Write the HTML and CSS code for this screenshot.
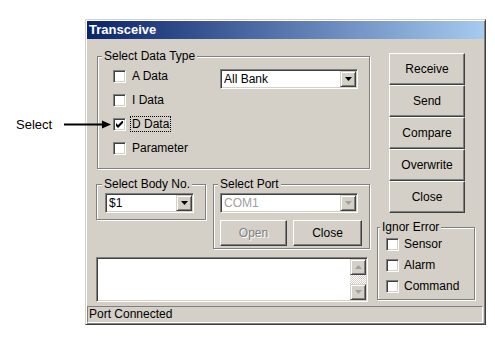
FILE: index.html
```html
<!DOCTYPE html>
<html lang="en">

<head>
    <meta charset="UTF-8">
    <meta name="viewport" content="width=device-width, initial-scale=1.0">
    <link rel="stylesheet" href="styles.css">
</head>

<body>
    <div class="page">
        <!-- annotation pointing at the D Data box -->
        <div class="note">
            <span class="note-text">Select</span>
            <svg class="note-arrow" width="47" height="9" viewBox="0 0 47 9">
                <rect x="0" y="3.5" width="40" height="2" fill="#000" />
                <polygon points="38,0.5 47,4.5 38,8.5" fill="#000" />
            </svg>
        </div>

        <div class="window">
            <div class="titlebar">Transceive</div>
            <div class="client">
                <div class="col-left">
                    <div class="group group-data">
                        <div class="group-title">Select Data Type</div>
                        <div class="data-body">
                            <div class="checks">
                                <div class="check-row"><span class="checkbox"></span><span class="check-label">A Data</span></div>
                                <div class="check-row"><span class="checkbox"></span><span class="check-label">I Data</span></div>
                                <div class="check-row"><span class="checkbox"><svg width="7" height="7" viewBox="0 0 7 7"><polygon points="0,2 2,4 7,-1 7,2 2,7 0,5" fill="#000" /></svg></span><span class="check-label focus">D Data</span></div>
                                <div class="check-row"><span class="checkbox"></span><span class="check-label">Parameter</span></div>
                            </div>
                            <div class="combo combo-bank">
                                <span class="combo-text">All Bank</span>
                                <span class="combo-btn"><svg width="7" height="4" viewBox="0 0 7 4"><polygon points="0,0 7,0 3.5,4" fill="#000" /></svg></span>
                            </div>
                        </div>
                    </div>

                    <div class="row-mid">
                        <div class="group group-body">
                            <div class="group-title">Select Body No.</div>
                            <div class="combo combo-body">
                                <span class="combo-text">$1</span>
                                <span class="combo-btn"><svg width="7" height="4" viewBox="0 0 7 4"><polygon points="0,0 7,0 3.5,4" fill="#000" /></svg></span>
                            </div>
                        </div>
                        <div class="group group-port">
                            <div class="group-title">Select Port</div>
                            <div class="combo combo-port disabled">
                                <span class="combo-text">COM1</span>
                                <span class="combo-btn"><svg width="7" height="4" viewBox="0 0 7 4"><polygon points="0,0 7,0 3.5,4" fill="#a0a0a0" /></svg></span>
                            </div>
                            <div class="port-btns">
                                <div class="btn btn-open disabled">Open</div>
                                <div class="btn btn-close">Close</div>
                            </div>
                        </div>
                    </div>

                    <div class="memo">
                        <div class="scrollbar">
                            <span class="sb-btn"><svg width="7" height="4" viewBox="0 0 7 4"><polygon points="0,4 7,4 3.5,0" fill="#a0a0a0" /></svg></span>
                            <span class="sb-track"></span>
                            <span class="sb-btn"><svg width="7" height="4" viewBox="0 0 7 4"><polygon points="0,0 7,0 3.5,4" fill="#a0a0a0" /></svg></span>
                        </div>
                    </div>
                </div>

                <div class="col-right">
                    <div class="btn-stack">
                        <div class="btn">Receive</div>
                        <div class="btn">Send</div>
                        <div class="btn">Compare</div>
                        <div class="btn">Overwrite</div>
                        <div class="btn">Close</div>
                    </div>
                    <div class="group group-ignore">
                        <div class="group-title">Ignor Error</div>
                        <div class="ignore-row"><span class="checkbox"></span><span class="check-label">Sensor</span></div>
                        <div class="ignore-row"><span class="checkbox"></span><span class="check-label">Alarm</span></div>
                        <div class="ignore-row"><span class="checkbox"></span><span class="check-label">Command</span></div>
                    </div>
                </div>
            </div>
            <div class="statusbar">Port Connected</div>
        </div>
    </div>
</body>

</html>
```

FILE: styles.css
```css
body {
    margin: 0;
    background: #fff;
    font-family: "Liberation Sans", Arial, sans-serif;
    font-size: 12px;
    color: #000;
}

.page {
    position: relative;
    width: 495px;
    height: 347px;
    padding: 19px 0 0 85px;
    box-sizing: border-box;
}

/* annotation */
.note {
    position: absolute;
    left: 16px;
    top: 117px;
    display: flex;
    align-items: center;
    z-index: 2;
}

.note-text {
    font-size: 13px;
    line-height: 15px;
}

.note-arrow {
    display: block;
    margin-left: 12px;
}

/* window frame */
.window {
    width: 401px;
    height: 306px;
    box-sizing: border-box;
    border: 1px solid;
    border-color: #d4d0c8 #404040 #404040 #d4d0c8;
    box-shadow: inset 1px 1px #fff, inset -1px -1px #808080;
    padding: 1px;
    background: #d4d0c8;
}

.titlebar {
    height: 18px;
    line-height: 18px;
    padding-left: 2px;
    background: linear-gradient(to right, #0a246a, #a6caf0);
    color: #fff;
    font-weight: bold;
    font-size: 13px;
}

.client {
    height: 267px;
    display: flex;
    padding-left: 9px;
}

.col-left {
    width: 274px;
}

.col-right {
    width: 99px;
    margin-left: 7px;
}

/* etched group box */
.group {
    box-sizing: border-box;
    border: 1px solid #808080;
    box-shadow: inset 1px 1px #fff, 1px 1px #fff;
}

.group-title {
    width: max-content;
    margin: -8px 0 0 4px;
    padding: 0 2px;
    line-height: 14px;
    background: #d4d0c8;
}

.group-data {
    width: 273px;
    height: 113px;
    margin: 17px 0 0 1px;
}

.data-body {
    display: flex;
    padding-left: 15px;
}

.checks {
    width: 107px;
}

.check-row {
    display: flex;
    align-items: flex-start;
    height: 24px;
}

.check-row .checkbox {
    margin-top: 7px;
}

.check-row .check-label {
    margin: 6px 0 0 6px;
    line-height: 14px;
}

.check-row .check-label.focus {
    margin: 5px 0 0 4px;
    padding: 0 1px;
    border: 1px dotted #000;
}

/* sunken checkbox */
.checkbox {
    width: 13px;
    height: 13px;
    flex: none;
    box-sizing: border-box;
    border: 1px solid;
    border-color: #808080 #fff #fff #808080;
    box-shadow: inset 1px 1px #404040, inset -1px -1px #d4d0c8;
    background: #fff;
    display: flex;
    align-items: center;
    justify-content: center;
}

.checkbox svg {
    display: block;
}

/* combo box */
.combo {
    height: 20px;
    box-sizing: border-box;
    border: 1px solid;
    border-color: #808080 #fff #fff #808080;
    box-shadow: inset 1px 1px #404040, inset -1px -1px #d4d0c8;
    background: #fff;
    padding: 1px;
    display: flex;
}

.combo-text {
    flex: 1;
    line-height: 16px;
    padding-left: 2px;
}

.combo-btn {
    width: 16px;
    height: 16px;
    box-sizing: border-box;
    border: 1px solid;
    border-color: #d4d0c8 #404040 #404040 #d4d0c8;
    box-shadow: inset 1px 1px #fff, inset -1px -1px #808080;
    background: #d4d0c8;
    display: flex;
    align-items: center;
    justify-content: center;
}

.combo-btn svg,
.sb-btn svg {
    display: block;
}

.combo.disabled .combo-text {
    color: #a0a0a0;
}

.combo-bank {
    width: 138px;
    margin-top: 6px;
}

.row-mid {
    display: flex;
    align-items: flex-start;
    margin-top: 15px;
}

.group-body {
    width: 110px;
    height: 36px;
}

.group-body .group-title {
    margin-left: 5px;
}

.combo-body {
    width: 89px;
    margin: 2px 0 0 8px;
}

.group-port {
    width: 157px;
    height: 65px;
    margin-left: 7px;
}

.combo-port {
    width: 138px;
    margin: 2px 0 0 6px;
}

.port-btns {
    display: flex;
    gap: 6px;
    margin-top: 7px;
    padding-left: 6px;
}

/* raised push button */
.btn {
    box-sizing: border-box;
    border: 1px solid;
    border-color: #fff #404040 #404040 #fff;
    box-shadow: inset -1px -1px #808080;
    background: #d4d0c8;
    display: flex;
    align-items: center;
    justify-content: center;
}

.btn.disabled {
    color: #808080;
    text-shadow: 1px 1px #fff;
}

.btn-open {
    width: 67px;
    height: 26px;
}

.btn-close {
    width: 69px;
    height: 26px;
}

/* multi-line edit */
.memo {
    width: 272px;
    height: 45px;
    margin-top: 8px;
    box-sizing: border-box;
    border: 1px solid;
    border-color: #808080 #fff #fff #808080;
    box-shadow: inset 1px 1px #404040, inset -1px -1px #d4d0c8;
    background: #fff;
    padding: 1px;
    display: flex;
    justify-content: flex-end;
}

.scrollbar {
    width: 16px;
    display: flex;
    flex-direction: column;
}

.sb-btn {
    height: 16px;
    box-sizing: border-box;
    border: 1px solid;
    border-color: #d4d0c8 #404040 #404040 #d4d0c8;
    box-shadow: inset 1px 1px #fff, inset -1px -1px #808080;
    background: #d4d0c8;
    display: flex;
    align-items: center;
    justify-content: center;
}

.sb-track {
    flex: 1;
    background: repeating-conic-gradient(#fff 0 25%, #d4d0c8 0 50%) 0 0 / 2px 2px;
}

/* right column */
.btn-stack {
    width: 76px;
    margin: 14px 0 0 12px;
}

.btn-stack .btn {
    height: 32px;
}

.group-ignore {
    width: 98px;
    height: 73px;
    margin-top: 14px;
}

.group-ignore .group-title {
    margin-left: 2px;
}

.ignore-row {
    display: flex;
    align-items: flex-start;
    height: 21px;
    padding-left: 8px;
}

.ignore-row .checkbox {
    margin-top: 4px;
}

.ignore-row .check-label {
    margin: 3px 0 0 5px;
    line-height: 14px;
}

.statusbar {
    width: 396px;
    height: 17px;
    box-sizing: border-box;
    border: 1px solid;
    border-color: #808080 #fff #fff #808080;
    line-height: 15px;
    padding-left: 1px;
}
```
